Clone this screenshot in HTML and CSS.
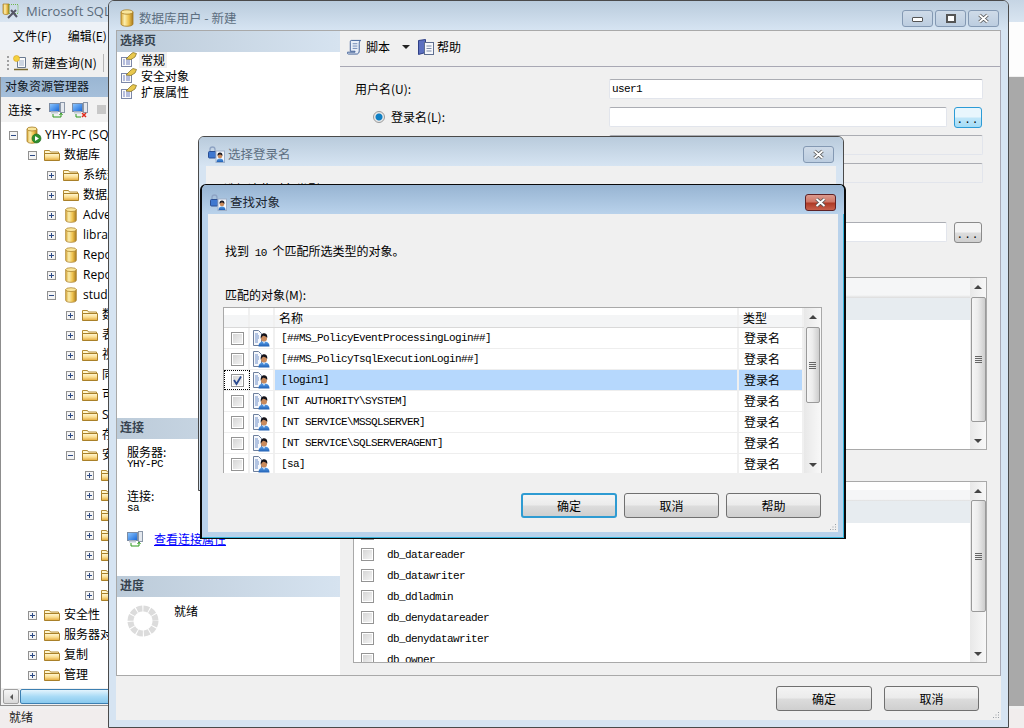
FILE: index.html
```html
<!DOCTYPE html>
<html lang="zh-CN">
<head>
<meta charset="utf-8">
<title>数据库用户 - 新建</title>
<link rel="stylesheet" href="styles.css">
</head>
<body>
<svg class="sprite" xmlns="http://www.w3.org/2000/svg">
  <defs>
    <linearGradient id="gFold" x1="0" y1="0" x2="0" y2="1"><stop offset="0" stop-color="#fff8d8"/><stop offset=".5" stop-color="#fbdf94"/><stop offset="1" stop-color="#e3a93c"/></linearGradient>
    <linearGradient id="gDb" x1="0" y1="0" x2="1" y2="0"><stop offset="0" stop-color="#d9a93a"/><stop offset=".3" stop-color="#fbeeae"/><stop offset=".65" stop-color="#eec24e"/><stop offset="1" stop-color="#a87a1e"/></linearGradient>
    <linearGradient id="gShirt" x1="0" y1="0" x2="0" y2="1"><stop offset="0" stop-color="#5aa0ea"/><stop offset="1" stop-color="#1f5fb4"/></linearGradient>
    <linearGradient id="gScreen" x1="0" y1="0" x2="1" y2="1"><stop offset="0" stop-color="#8fc8ff"/><stop offset="1" stop-color="#1566d8"/></linearGradient>
    <symbol id="plus" viewBox="0 0 9 9"><rect x=".5" y=".5" width="8" height="8" fill="#f4f4f4" stroke="#919191"/><path d="M2 4.500h5M4.500 2v5" stroke="#2c4a86" fill="none"/></symbol>
    <symbol id="minus" viewBox="0 0 9 9"><rect x=".5" y=".5" width="8" height="8" fill="#f4f4f4" stroke="#919191"/><path d="M2 4.500h5" stroke="#2c4a86" fill="none"/></symbol>
    <symbol id="folder" viewBox="0 0 16 16"><path d="M.5 3.500h5l1 1.500h8v3H.5z" fill="#fff7d0" stroke="#b58c34"/><path d="M.5 6.500h15v7H.5z" fill="url(#gFold)" stroke="#a98029"/></symbol>
    <symbol id="db" viewBox="0 0 14 18"><path d="M1 3v12c0 3 12 3 12 0V3z" fill="url(#gDb)" stroke="#a67c24" stroke-width=".8"/><ellipse cx="7" cy="3" rx="6" ry="2.200" fill="#f9e59a" stroke="#a67c24" stroke-width=".8"/></symbol>
    <symbol id="server" viewBox="0 0 16 18"><path d="M1 3v12c0 3 10 3 10 0V3z" fill="url(#gDb)" stroke="#a67c24" stroke-width=".8"/><ellipse cx="6" cy="3" rx="5" ry="2" fill="#f9e59a" stroke="#a67c24" stroke-width=".8"/><circle cx="10.500" cy="12.500" r="4.500" fill="#2f8f2f" stroke="#1d6a1d" stroke-width=".6"/><path d="M9 10l4 2.500-4 2.500z" fill="#fff"/></symbol>
    <symbol id="user" viewBox="0 0 17 17"><path d="M.5 .5h5l3 3v12h-8z" fill="#f6f8fc" stroke="#6d7f9d"/><path d="M2 4h3M2 6h4M2 8h4M2 10h3M2 12h3" stroke="#6f8fc8" fill="none"/><path d="M5.500 16.500c0-4 2.500-5 5.500-5s5.500 1 5.500 5z" fill="url(#gShirt)"/><path d="M10 11.500l1 2.500 1-2.500z" fill="#fff"/><circle cx="11" cy="8.500" r="3" fill="#c98a5c"/><path d="M7.800 8.800c-.5-4 1.700-5.800 3.700-5.500 2.200.2 3.200 2.200 2.700 4.700-1-1.500-3-2.200-3.500-2.200-.8 0-2.200 1.300-2.900 3z" fill="#16141a"/></symbol>
    <symbol id="lockuser" viewBox="0 0 17 17"><path d="M2 6V3.500a2.500 2.500 0 0 1 5 0V6" fill="none" stroke="#8fa4c4" stroke-width="1.300"/><rect x=".5" y="5.500" width="7.500" height="6.500" rx="1" fill="#3f78d0" stroke="#2a4f94"/><rect x="8" y="5" width="8.500" height="11.500" fill="#f4f7fc" stroke="#9fb0c8"/><path d="M8.500 16c0-2.500 1.500-3.500 3.500-3.500s3.500 1 3.500 3.500z" fill="url(#gShirt)"/><circle cx="12" cy="10" r="2.300" fill="#c98a5c"/><path d="M9.500 10c-.3-2.500 1-3.500 2.500-3.500s2.800 1 2.400 3.500c-.8-1-1.800-1.500-2.400-1.500s-2 .5-2.500 1.500z" fill="#1c1a22"/></symbol>
    <symbol id="page" viewBox="0 0 16 16"><rect x=".5" y="5.500" width="10" height="9" fill="#fafafa" stroke="#7c87a8"/><path d="M2 8h2M5 8h4M2 10h2M5 10h4M2 12h2M5 12h4" stroke="#6f7fc0" fill="none"/><path d="M5 7l5-5 2-1.500 3.500 1L14 5l-4 2.500z" fill="#e9c84e" stroke="#7d6a1e" stroke-width=".7"/></symbol>
    <symbol id="script" viewBox="0 0 17 17"><path d="M4.500 1.500h10c-1.500 1-1.500 2.500-1.500 4v7c0 2-1 3.500-2.500 3.500h-9c-1 0-1.500-1-1-2h8v-1h-5V4c0-1.500 0-2.500 1-2.500z" fill="#e8eef8" stroke="#3c5c94"/><path d="M6 5h5M6 7.500h5M6 10h5" stroke="#6d86b4" fill="none"/></symbol>
    <symbol id="book" viewBox="0 0 16 16"><path d="M.5 1.500l7-1v13l-7 2z" fill="#5c70c0" stroke="#2f3f86"/><rect x="6.500" y="3.500" width="9" height="12" fill="#f6f8fc" stroke="#5f6f90"/><path d="M8.500 7h5M8.500 9.500h5M8.500 12h5" stroke="#7c8aa6" fill="none"/></symbol>
    <symbol id="conn" viewBox="0 0 16 16"><rect x=".5" y="1.500" width="10" height="8" fill="url(#gScreen)" stroke="#7c8ca4"/><rect x="2" y="9.500" width="7" height="2" fill="#c4ccd8"/><rect x="11.500" y=".5" width="4" height="10" fill="#e4e8ee" stroke="#8b97a8"/><path d="M4 12v3h8v-3M10.500 13l1.500-2 1.500 2" fill="none" stroke="#2f9a1e"/></symbol>
    <symbol id="disc" viewBox="0 0 16 16"><rect x=".5" y="1.500" width="10" height="8" fill="url(#gScreen)" stroke="#7c8ca4"/><rect x="2" y="9.500" width="7" height="2" fill="#c4ccd8"/><rect x="11.500" y=".5" width="4" height="10" fill="#e4e8ee" stroke="#8b97a8"/><path d="M4 12v3h5" fill="none" stroke="#2f9a1e"/><path d="M10 11l4 4m0-4l-4 4" stroke="#e02a1a" stroke-width="1.500"/></symbol>
    <symbol id="newq" viewBox="0 0 16 16"><path d="M4.500 2.500h8v10h-8z" fill="#fafafa" stroke="#6a7a90"/><path d="M6 6h5M6 8h5M6 10h5" stroke="#9fb0c8"/><circle cx="3.500" cy="3.500" r="3" fill="#f4d13c" stroke="#d9a01e" stroke-width=".6"/><path d="M1 14.500h14" stroke="#7a6a30" stroke-width="1.500"/></symbol>
    <symbol id="app" viewBox="0 0 18 18"><path d="M1 2v9c0 2 6 2 6 0V2z" fill="url(#gDb)" stroke="#a67c24" stroke-width=".7"/><rect x="7" y="2.500" width="9" height="9" fill="none" stroke="#6fb84a" stroke-dasharray="1 1"/><path d="M6 16l8-8M9 8l6 7" stroke="#556" stroke-width="2"/></symbol>
    <symbol id="x" viewBox="0 0 13 11"><path d="M2.500 2l8 7m0-7l-8 7" stroke="#555" stroke-width="3.600" fill="none"/><path d="M2.500 2l8 7m0-7l-8 7" stroke="#fff" stroke-width="1.800" fill="none"/></symbol>
    <symbol id="grip" viewBox="0 0 8 8"><path d="M6.500 1v1M4 3.500v1M6.500 3.500v1M1.500 6v1M4 6v1M6.500 6v1" stroke="#9aa0a6" stroke-width="1" fill="none"/></symbol>
    <symbol id="check" viewBox="0 0 11 11"><path d="M2 5l2.500 4L9 1.500" fill="none" stroke="#2b4a90" stroke-width="1.800"/></symbol>
  </defs>
</svg>

<div class="desktop">
  <!-- background application -->
  <div class="app">
    <div class="app-title"><svg class="app-icon"><use href="#app"/></svg><span>Microsoft SQL Server Management Studio</span></div>
    <div class="menubar"><span class="menu">文件(F)</span><span class="menu">编辑(E)</span></div>
    <div class="toolbar"><i class="tb-grip"></i><svg class="ic16"><use href="#newq"/></svg><span>新建查询(N)</span><i class="tb-sep"></i></div>
    <div class="app-main">
      <div class="explorer">
        <div class="ex-head">对象资源管理器</div>
        <div class="ex-bar"><span>连接</span><i class="caret"></i><svg class="ic16"><use href="#conn"/></svg><svg class="ic16"><use href="#disc"/></svg><i class="stop"></i></div>
        <div class="tree">
          <div class="node l0"><svg class="exp"><use href="#minus"/></svg><svg class="ic-srv"><use href="#server"/></svg><span>YHY-PC (SQL Server)</span></div>
          <div class="node l1"><svg class="exp"><use href="#minus"/></svg><svg class="ic"><use href="#folder"/></svg><span>数据库</span></div>
          <div class="node l2"><svg class="exp"><use href="#plus"/></svg><svg class="ic"><use href="#folder"/></svg><span>系统数据库</span></div>
          <div class="node l2"><svg class="exp"><use href="#plus"/></svg><svg class="ic"><use href="#folder"/></svg><span>数据库快照</span></div>
          <div class="node l2"><svg class="exp"><use href="#plus"/></svg><svg class="ic"><use href="#db"/></svg><span>AdventureWorks</span></div>
          <div class="node l2"><svg class="exp"><use href="#plus"/></svg><svg class="ic"><use href="#db"/></svg><span>library</span></div>
          <div class="node l2"><svg class="exp"><use href="#plus"/></svg><svg class="ic"><use href="#db"/></svg><span>ReportServer</span></div>
          <div class="node l2"><svg class="exp"><use href="#plus"/></svg><svg class="ic"><use href="#db"/></svg><span>ReportServerTempDB</span></div>
          <div class="node l2"><svg class="exp"><use href="#minus"/></svg><svg class="ic"><use href="#db"/></svg><span>student</span></div>
          <div class="node l3"><svg class="exp"><use href="#plus"/></svg><svg class="ic"><use href="#folder"/></svg><span>数据库关系图</span></div>
          <div class="node l3"><svg class="exp"><use href="#plus"/></svg><svg class="ic"><use href="#folder"/></svg><span>表</span></div>
          <div class="node l3"><svg class="exp"><use href="#plus"/></svg><svg class="ic"><use href="#folder"/></svg><span>视图</span></div>
          <div class="node l3"><svg class="exp"><use href="#plus"/></svg><svg class="ic"><use href="#folder"/></svg><span>同义词</span></div>
          <div class="node l3"><svg class="exp"><use href="#plus"/></svg><svg class="ic"><use href="#folder"/></svg><span>可编程性</span></div>
          <div class="node l3"><svg class="exp"><use href="#plus"/></svg><svg class="ic"><use href="#folder"/></svg><span>Service Broker</span></div>
          <div class="node l3"><svg class="exp"><use href="#plus"/></svg><svg class="ic"><use href="#folder"/></svg><span>存储</span></div>
          <div class="node l3"><svg class="exp"><use href="#minus"/></svg><svg class="ic"><use href="#folder"/></svg><span>安全性</span></div>
          <div class="node l4"><svg class="exp"><use href="#plus"/></svg><svg class="ic"><use href="#folder"/></svg></div>
          <div class="node l4"><svg class="exp"><use href="#plus"/></svg><svg class="ic"><use href="#folder"/></svg></div>
          <div class="node l4"><svg class="exp"><use href="#plus"/></svg><svg class="ic"><use href="#folder"/></svg></div>
          <div class="node l4"><svg class="exp"><use href="#plus"/></svg><svg class="ic"><use href="#folder"/></svg></div>
          <div class="node l4"><svg class="exp"><use href="#plus"/></svg><svg class="ic"><use href="#folder"/></svg></div>
          <div class="node l4"><svg class="exp"><use href="#plus"/></svg><svg class="ic"><use href="#folder"/></svg></div>
          <div class="node l4"><svg class="exp"><use href="#plus"/></svg><svg class="ic"><use href="#folder"/></svg></div>
          <div class="node l1"><svg class="exp"><use href="#plus"/></svg><svg class="ic"><use href="#folder"/></svg><span>安全性</span></div>
          <div class="node l1"><svg class="exp"><use href="#plus"/></svg><svg class="ic"><use href="#folder"/></svg><span>服务器对象</span></div>
          <div class="node l1"><svg class="exp"><use href="#plus"/></svg><svg class="ic"><use href="#folder"/></svg><span>复制</span></div>
          <div class="node l1"><svg class="exp"><use href="#plus"/></svg><svg class="ic"><use href="#folder"/></svg><span>管理</span></div>
        </div>
        <div class="hscroll"><i class="hs-btn"><i class="hs-arrow"></i></i><i class="hs-thumb"></i></div>
      </div>
      <div class="workspace"></div>
    </div>
    <div class="statusbar">就绪</div>
  </div>

  <!-- 数据库用户 - 新建 -->
  <div class="dlg d1">
    <div class="dlg-title d1-title">
      <svg class="ic-title"><use href="#db"/></svg><span>数据库用户 - 新建</span>
      <div class="win-btns">
        <span class="wbtn"><i class="g-min"></i></span>
        <span class="wbtn"><i class="g-max"></i></span>
        <span class="wbtn"><svg class="g-x"><use href="#x"/></svg></span>
      </div>
    </div>
    <div class="dlg-body d1-body">
      <div class="d1-main">
        <aside class="side">
          <div class="side-head">选择页</div>
          <div class="side-pages">
            <div class="pg"><svg class="ic"><use href="#page"/></svg><span class="pg-on">常规</span></div>
            <div class="pg"><svg class="ic"><use href="#page"/></svg><span>安全对象</span></div>
            <div class="pg"><svg class="ic"><use href="#page"/></svg><span>扩展属性</span></div>
          </div>
          <div class="side-head">连接</div>
          <div class="side-conn">
            <div class="ln">服务器:</div>
            <div class="mono">YHY-PC</div>
            <div class="ln ln-gap">连接:</div>
            <div class="mono">sa</div>
            <div class="conn-link"><svg class="ic"><use href="#conn"/></svg><a href="#" class="link">查看连接属性</a></div>
          </div>
          <div class="side-head">进度</div>
          <div class="side-prog">
            <svg class="spinner" viewBox="0 0 32 32"><circle cx="16" cy="16" r="12.500" fill="none" stroke="#dcdcdc" stroke-width="6" stroke-dasharray="5.500 1.050"/></svg>
            <span class="prog-text">就绪</span>
          </div>
        </aside>
        <section class="page">
          <div class="pg-bar">
            <svg class="ic"><use href="#script"/></svg><span>脚本</span><i class="caret big"></i>
            <svg class="ic"><use href="#book"/></svg><span>帮助</span>
          </div>
          <div class="form">
            <div class="frow"><label class="flabel">用户名(U):</label><input class="tb mono" value="user1"></div>
            <div class="frow"><label class="flabel ind"><i class="radio"></i>登录名(L):</label><input class="tb"><button class="more hot">...</button></div>
            <div class="frow"><span class="flabel"></span><input class="tb off" disabled></div>
            <div class="frow"><span class="flabel"></span><input class="tb off" disabled></div>
            <div class="frow frow-far"><span class="flabel"></span><input class="tb"><button class="more">...</button></div>
            <div class="lbox lbox1">
              <div class="lb-list">
                <div class="lb-head"></div>
                <div class="lb-sel"></div>
              </div>
              <div class="vscroll"><i class="arr up"></i><div class="thumb t1"><i class="grip3"></i></div><i class="arr down"></i></div>
            </div>
            <div class="lbox lbox2">
              <div class="lb-list">
                <div class="lb-head"></div>
                <div class="lb-sel"></div>
                <div class="role"><i class="cb"></i></div>
                <div class="role"><i class="cb"></i><span class="mono">db_datareader</span></div>
                <div class="role"><i class="cb"></i><span class="mono">db_datawriter</span></div>
                <div class="role"><i class="cb"></i><span class="mono">db_ddladmin</span></div>
                <div class="role"><i class="cb"></i><span class="mono">db_denydatareader</span></div>
                <div class="role"><i class="cb"></i><span class="mono">db_denydatawriter</span></div>
                <div class="role"><i class="cb"></i><span class="mono">db_owner</span></div>
              </div>
              <div class="vscroll"><i class="arr up"></i><div class="thumb t2"><i class="grip3"></i></div><i class="arr down"></i></div>
            </div>
          </div>
        </section>
      </div>
      <div class="footer">
        <button class="btn w96">确定</button><button class="btn w95">取消</button>
        <svg class="resize"><use href="#grip"/></svg>
      </div>
    </div>
  </div>

  <!-- 选择登录名 -->
  <div class="dlg d2">
    <div class="dlg-title d1-title">
      <svg class="ic-lock"><use href="#lockuser"/></svg><span>选择登录名</span>
      <div class="win-btns"><span class="wbtn"><svg class="g-x"><use href="#x"/></svg></span></div>
    </div>
    <div class="dlg-body d2-body">选择这些对象类型(S):</div>
  </div>

  <!-- 查找对象 -->
  <div class="dlg d3">
    <div class="dlg-title d3-title">
      <svg class="ic-lock"><use href="#lockuser"/></svg><span>查找对象</span>
      <div class="win-btns"><span class="wbtn red"><svg class="g-x"><use href="#x"/></svg></span></div>
    </div>
    <div class="dlg-body d3-body">
      <p class="msg">找到 <span class="num">10</span> 个匹配所选类型的对象。</p>
      <p class="cap">匹配的对象(M):</p>
      <div class="tbl">
        <div class="tbl-main">
          <div class="tr th"><div></div><div></div><div class="td">名称</div><div class="td">类型</div></div>
          <div class="tr"><div class="c"><i class="cb"></i></div><div class="c"><svg class="ic17"><use href="#user"/></svg></div><div class="td mono">[##MS_PolicyEventProcessingLogin##]</div><div class="td">登录名</div></div>
          <div class="tr"><div class="c"><i class="cb"></i></div><div class="c"><svg class="ic17"><use href="#user"/></svg></div><div class="td mono">[##MS_PolicyTsqlExecutionLogin##]</div><div class="td">登录名</div></div>
          <div class="tr sel"><div class="c focus"><i class="cb"><svg class="tick"><use href="#check"/></svg></i></div><div class="c"><svg class="ic17"><use href="#user"/></svg></div><div class="td mono on">[login1]</div><div class="td on">登录名</div></div>
          <div class="tr"><div class="c"><i class="cb"></i></div><div class="c"><svg class="ic17"><use href="#user"/></svg></div><div class="td mono">[NT AUTHORITY\SYSTEM]</div><div class="td">登录名</div></div>
          <div class="tr"><div class="c"><i class="cb"></i></div><div class="c"><svg class="ic17"><use href="#user"/></svg></div><div class="td mono">[NT SERVICE\MSSQLSERVER]</div><div class="td">登录名</div></div>
          <div class="tr"><div class="c"><i class="cb"></i></div><div class="c"><svg class="ic17"><use href="#user"/></svg></div><div class="td mono">[NT SERVICE\SQLSERVERAGENT]</div><div class="td">登录名</div></div>
          <div class="tr"><div class="c"><i class="cb"></i></div><div class="c"><svg class="ic17"><use href="#user"/></svg></div><div class="td mono">[sa]</div><div class="td">登录名</div></div>
        </div>
        <div class="vscroll"><i class="arr up"></i><div class="thumb t3"><i class="grip3"></i></div><i class="arr down"></i></div>
      </div>
      <div class="d3-btns">
        <button class="btn w96 default">确定</button><button class="btn w95">取消</button><button class="btn w95">帮助</button>
      </div>
      <svg class="resize"><use href="#grip"/></svg>
    </div>
  </div>
</div>
</body>
</html>
```
FILE: styles.css
```css
* { box-sizing: border-box; }
html, body { margin: 0; padding: 0; }
body {
  font: 12px/16px "Noto Sans CJK SC", "Noto Sans", sans-serif;
  color: #000;
  background: #f0f0f0;
}
i { display: block; }
p { margin: 0; }
.sprite { display: block; width: 0; height: 0; overflow: hidden; }
.desktop { position: relative; width: 1024px; height: 728px; overflow: hidden; }
.mono {
  font-family: "Liberation Mono", monospace;
  font-size: 11px;
  letter-spacing: -.6px;
}

/* application behind */
.app { display: flex; flex-direction: column; width: 1024px; height: 728px; background: #f0f0f0; }
.app-title {
  height: 22px; display: flex; align-items: center; gap: 6px; padding: 0 0 1px 2px;
  background: linear-gradient(#c6d5e4, #d9e5f1);
  color: #5a6b7c; font: 13px "Open Sans", sans-serif; white-space: nowrap;
}
.app-icon { width: 18px; height: 18px; flex: none; }
.menubar {
  height: 28px; display: flex; align-items: center; gap: 16px; padding-left: 13px;
  background: linear-gradient(90deg, #eef2f7 80%, #fdfdfd 98%);
}
.toolbar {
  height: 26px; display: flex; align-items: center; padding: 0 0 1px 7px;
  background: linear-gradient(90deg, #f0f0f0 80%, #fdfdfd 98%);
}
.tb-grip { width: 2px; height: 14px; margin-right: 4px; border-left: 2px dotted #a0a0a0; }
.ic16 { width: 16px; height: 16px; flex: none; }
.toolbar span { margin-left: 3px; }
.tb-sep { width: 1px; height: 18px; margin-left: 6px; background: #b5b5b5; }
.app-main { display: flex; height: 632px; margin-top: 1px; }
.explorer { width: 340px; height: 629px; display: flex; flex-direction: column; border-left: 1px solid #8d8d8d; border-bottom: 1px solid #8d8d8d; background: #fff; }
.workspace { flex: 1; height: 629px; background: #a9a9a9; }
.ex-head { height: 20px; line-height: 18px; padding-left: 4px; background: linear-gradient(#9ab6d3, #a5bfda); color: #10161d; }
.ex-bar { height: 25px; display: flex; align-items: center; padding-left: 7px; background: #f2f2f2; }
.caret { width: 0; height: 0; margin: 0 8px 0 3px; border: 3px solid transparent; border-top: 3px solid #222; border-bottom: 0; }
.ex-bar .ic16 { margin-right: 7px; }
.stop { width: 9px; height: 9px; background: #c8c8c8; margin-left: 2px; }
.tree { flex: 1; padding-top: 3px; overflow: hidden; white-space: nowrap; }
.node { height: 20px; display: flex; align-items: center; font-family: "Open Sans", "Noto Sans CJK SC", sans-serif; }
.l0 { padding-left: 8px; } .l1 { padding-left: 27px; } .l2 { padding-left: 46px; } .l3 { padding-left: 65px; } .l4 { padding-left: 84px; }
.exp { width: 9px; height: 9px; flex: none; margin-right: 7px; }
.ic { width: 16px; height: 16px; flex: none; margin-right: 4px; }
.ic-srv { width: 16px; height: 18px; flex: none; margin: 0 3px 0 1px; }
.hscroll { height: 17px; display: flex; gap: 1px; padding: 1px 0 1px 2px; background: #f0f0f0; }
.hs-btn { width: 16px; display: flex; align-items: center; justify-content: center; border: 1px solid #a0a0a0; border-radius: 2px; background: linear-gradient(#f6f6f6, #d8d8d8); }
.hs-arrow { width: 0; height: 0; border: 3px solid transparent; border-left: 0; border-right: 3px solid #555; }
.hs-thumb { flex: 1; border: 1px solid #3c7fb1; border-radius: 2px; background: linear-gradient(#e3f4fd, #a9dbf6 50%, #88c9ee); }
.statusbar { flex: 1; padding: 0 0 0 9px; background: #f1eded; color: #222; }

/* dialogs */
.dlg { position: absolute; display: flex; flex-direction: column; border: 1px solid #4a4a4a; border-radius: 6px 6px 0 0; background: #d6e4f2; }
.dlg-title { height: 29px; flex: none; display: flex; align-items: center; padding-top: 5px; color: #5c6e80; border-radius: 5px 5px 0 0; }
.d1-title { background: linear-gradient(#b9cbdc, #d6e4f2); }
.d3-title { background: linear-gradient(#97b4d2, #b9d2eb); color: #1a2530; }
.dlg-body { flex: 1; margin: 0 7px 7px; background: #f0f0f0; position: relative; min-height: 0; }
.win-btns { margin-left: auto; display: flex; gap: 2px; padding-right: 9px; }
.wbtn { width: 31px; height: 17px; display: flex; align-items: center; justify-content: center; border: 1px solid #8499b3; border-radius: 3px; background: linear-gradient(#cfdbe8, #bccde0); }
.wbtn.red { border-color: #5e2226; background: linear-gradient(#dc9a8e, #cf7767 45%, #ae3a26 55%, #c7604c); }
.g-x { width: 13px; height: 11px; }
.g-min { width: 11px; height: 5px; margin-top: 3px; border: 1px solid #555; background: #fff; border-radius: 1px; }
.g-max { width: 10px; height: 9px; border: 2px solid #555; background: #fff; }

/* 数据库用户 */
.d1 { left: 108px; top: 0; width: 901px; height: 728px; }
.ic-title { width: 14px; height: 18px; margin: 0 5px 0 11px; flex: none; }
.d1 .dlg-title span { font-size: 12.500px; }
.d1-body { display: flex; flex-direction: column; }
.d1-main { height: 646px; display: flex; }
.side { width: 224px; flex: none; display: flex; flex-direction: column; background: #fff; border: 1px solid #a9a9a9; border-right: 0; }
.side-head { height: 21px; flex: none; line-height: 18px; padding-left: 3px; font-weight: 700; color: #37434f; background: linear-gradient(90deg, #bccbd9, #d6e3f0); }
.side-pages { height: 366px; padding: 0 0 0 4px; }
.pg { height: 16px; display: flex; align-items: center; }
.pg .ic { margin-right: 2px; }
.pg span { padding: 0 2px; }
.pg-on { background: #f0f0f0; }
.side-conn { height: 137px; padding: 7px 0 0 10px; line-height: 12px; }
.ln-gap { margin-top: 20px; }
.conn-link { display: flex; align-items: center; margin-top: 17px; }
.conn-link .ic { margin-right: 11px; }
.link { color: #0000ff; text-decoration: underline; }
.side-prog { flex: 1; display: flex; padding: 8px 0 0 10px; }
.spinner { width: 32px; height: 32px; margin-right: 15px; }
.prog-text { margin-top: -2px; }
.page { flex: 1; display: flex; flex-direction: column; border-top: 1px solid #a9a9a9; border-bottom: 1px solid #a9a9a9; border-right: 1px solid #a8a8b4; }
.pg-bar { height: 36px; flex: none; display: flex; align-items: center; padding: 0 0 4px 7px; border-bottom: 1px solid #a8a8b4; }
.pg-bar .ic { margin-right: 3px; }
.caret.big { margin: 0 8px 0 12px; border-width: 4px; border-top-width: 4px; }
.form { flex: 1; padding: 12px 13px 0; min-height: 0; }
.frow { height: 20px; margin-bottom: 8px; display: flex; align-items: center; padding: 0 4px 0 2px; }
.frow-far { margin-top: 39px; margin-bottom: 35px; }
.flabel { width: 254px; flex: none; display: flex; align-items: center; }
.flabel.ind { padding-left: 18px; }
.radio { width: 12px; height: 12px; margin-right: 6px; border-radius: 50%; border: 1px solid #9a9a9a; background: radial-gradient(circle, #0f7fc4 0 3px, #e9e9e9 4px); }
.tb { flex: 1; min-width: 0; height: 20px; padding: 0 2px; border: 1px solid #e2e5ec; border-top-color: #abadb3; border-radius: 2px; background: #fff; outline: 0; color: #000; }
.tb.off { background: #f0f0f0; }
.more { width: 28px; height: 21px; margin: 1px 1px 0 7px; padding: 0; flex: none; font: 11px/24px "Liberation Mono", monospace; letter-spacing: 1px; border: 1px solid #8a8a8a; border-radius: 3px; background: linear-gradient(#f4f4f4 45%, #dcdcdc 55%, #cfcfcf); }
.more.hot { border-color: #2c9bd6; background: linear-gradient(#e8f6fd 45%, #bfe6f9 55%, #a4dcf6); }
.lbox { display: flex; width: 634px; border: 1px solid #a9a9a9; background: #fff; overflow: hidden; }
.lbox1 { height: 173px; margin-bottom: 31px; }
.lbox2 { height: 182px; }
.lb-list { flex: 1; min-width: 0; }
.lb-head { height: 20px; background: linear-gradient(#f5f6f7 85%, #dcdcdc); }
.lb-sel { height: 22px; background: #e7ecf0; }
.lbox2 .lb-head { height: 11px; margin-top: 8px; }
.role { height: 21px; display: flex; align-items: center; padding-left: 7px; }
.role .cb { margin-right: 13px; }

.vscroll { width: 16px; flex: none; display: flex; flex-direction: column; align-items: center; background: linear-gradient(90deg, #e8e8e8, #f8f8f8); position: relative; }
.arr { width: 0; height: 0; border: 4px solid transparent; }
.arr.up { border-top: 0; border-bottom: 4px solid #444; margin-top: 7px; }
.arr.down { border-bottom: 0; border-top: 4px solid #444; margin-top: auto; margin-bottom: 6px; }
.thumb { width: 15px; display: flex; align-items: center; justify-content: center; border: 1px solid #9a9a9a; border-radius: 2px; background: linear-gradient(90deg, #f6f6f6, #ececec 45%, #cdcdcd); margin-top: 7px; }
.t1 { height: 125px; margin-top: 8px; }
.t2 { height: 112px; }
.t3 { height: 76px; width: 14px; margin-top: 8px; }
.grip3 { width: 7px; height: 7px; background: repeating-linear-gradient(#666 0 1px, transparent 1px 2px); }

.footer { flex: 1; display: flex; justify-content: flex-end; padding: 10px 22px 0 0; gap: 12px; position: relative; }
.btn { height: 25px; padding: 0; font: 12px "Noto Sans CJK SC", sans-serif; color: #000; border: 1px solid #707070; border-radius: 3px; background: linear-gradient(#f4f4f4, #ebebeb 48%, #dcdcdc 52%, #cfcfcf); }
.w96 { width: 96px; } .w95 { width: 95px; }
.btn.default { border: 2px solid #2e9bd2; }
.resize { position: absolute; right: 1px; bottom: 1px; width: 8px; height: 8px; }

/* 选择登录名 */
.d2 { left: 198px; top: 136px; width: 646px; height: 355px; }
.ic-lock { width: 17px; height: 17px; flex: none; margin: 0 3px 0 9px; }
.d2 .dlg-title span { font-size: 12.500px; }
.d2-body { padding: 15px 0 0 18px; }

/* 查找对象 */
.d3 { left: 200px; top: 184px; width: 646px; height: 355px; border-color: #0a0a0a; border-width: 1px 2px 1px 2px; background: #b9d2eb; box-shadow: inset -1px -1px 0 #35b4dc; }
.d3 .dlg-title span { font-size: 12.500px; }
.d3 .ic-lock { margin-left: 8px; }
.d3 .dlg-body { margin: 0 6px 6px 6px; }
.d3 .win-btns { padding-right: 8px; }
.d3-body { padding: 29px 0 0 15px; }
.msg { padding-left: 2px; word-spacing: 3px; }
.num { font-family: "Liberation Mono", monospace; font-size: 11px; letter-spacing: -.6px; }
.cap { margin-top: 26px; padding-left: 2px; }
.tbl { width: 599px; height: 166px; margin-top: 4px; display: flex; border: 1px solid #a9a9a9; border-bottom: 0; background: #fff; overflow: hidden; }
.tbl-main { flex: 1; min-width: 0; }
.tbl .vscroll { width: 17px; }
.tr { height: 21px; display: grid; grid-template-columns: 26px 25px 1fr 65px; border-bottom: 1px solid #eeeeee; }
.tr > div { border-right: 2px solid #f0f0f0; display: flex; align-items: center; justify-content: center; }
.tr > .c:first-child { padding-left: 2px; }
.tr > .td { justify-content: flex-start; padding-left: 5px; white-space: nowrap; }
.tr > .td.mono { padding-left: 6px; }
.th { height: 20px; border-bottom: 1px solid #d9d9d9; background: linear-gradient(#fff 35%, #f4f5f6 35%); }
.th > .td { padding-left: 4px; line-height: 15px; }
.tr.th > .td { padding-left: 4px; }
.on { background: #b6d8fd; }
.focus { outline: 1px dotted #000; outline-offset: -1px; }
.cb { width: 13px; height: 13px; flex: none; display: block; border: 1px solid #949494; background: linear-gradient(135deg, #d2d2d2, #f6f6f6); box-shadow: inset 0 0 0 1px #fff; }
.tick { display: block; width: 11px; height: 11px; }
.ic17 { width: 17px; height: 17px; }
.d3-btns { display: flex; gap: 7px; justify-content: flex-end; margin: 20px 17px 0 0; }
```
